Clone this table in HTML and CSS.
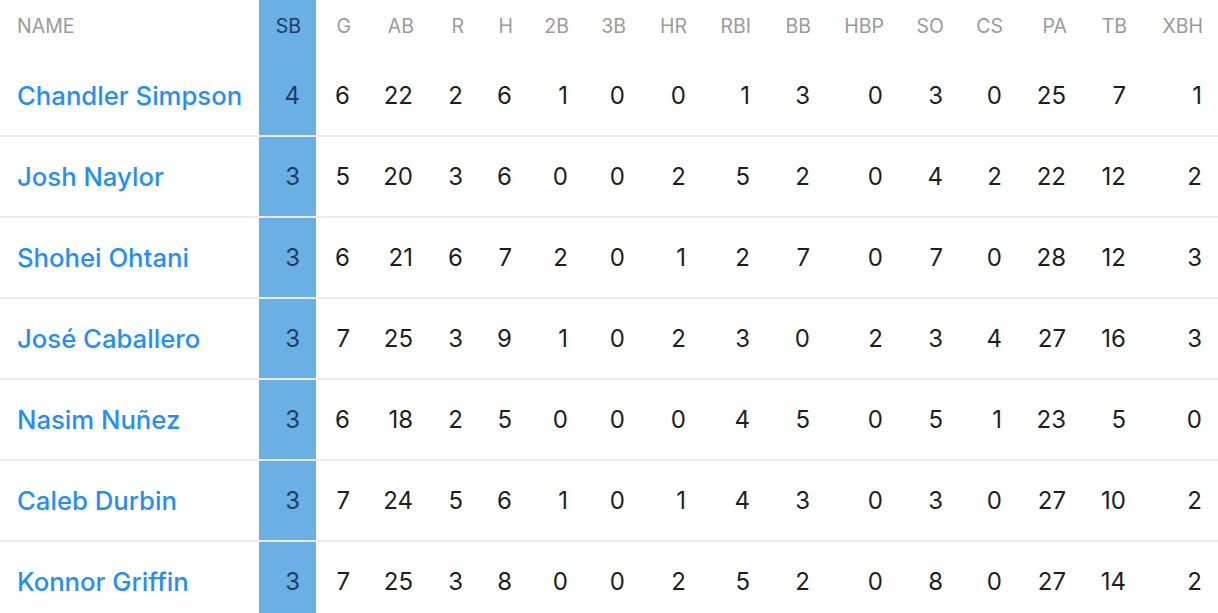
FILE: index.html
```html
<!DOCTYPE html>
<html lang="en">
<head>
<meta charset="utf-8">
<title>Stolen Bases Leaders</title>
<link rel="stylesheet" href="styles.css">
</head>
<body>
<table class="stats">
  <colgroup>
    <col class="c-name"><col class="c-sb"><col class="c-g"><col class="c-ab"><col class="c-r"><col class="c-h"><col class="c-2b"><col class="c-3b"><col class="c-hr"><col class="c-rbi"><col class="c-bb"><col class="c-hbp"><col class="c-so"><col class="c-cs"><col class="c-pa"><col class="c-tb"><col class="c-xbh">
  </colgroup>
  <thead>
    <tr>
      <th class="name">NAME</th><th class="sb">SB</th><th>G</th><th>AB</th><th>R</th><th>H</th><th>2B</th><th>3B</th><th>HR</th><th>RBI</th><th>BB</th><th>HBP</th><th>SO</th><th>CS</th><th>PA</th><th>TB</th><th>XBH</th>
    </tr>
  </thead>
  <tbody>
    <tr><td class="name"><a href="#">Chandler Simpson</a></td><td class="sb">4</td><td>6</td><td>22</td><td>2</td><td>6</td><td>1</td><td>0</td><td>0</td><td>1</td><td>3</td><td>0</td><td>3</td><td>0</td><td>25</td><td>7</td><td>1</td></tr>
    <tr><td class="name"><a href="#">Josh Naylor</a></td><td class="sb">3</td><td>5</td><td>20</td><td>3</td><td>6</td><td>0</td><td>0</td><td>2</td><td>5</td><td>2</td><td>0</td><td>4</td><td>2</td><td>22</td><td>12</td><td>2</td></tr>
    <tr><td class="name"><a href="#">Shohei Ohtani</a></td><td class="sb">3</td><td>6</td><td>21</td><td>6</td><td>7</td><td>2</td><td>0</td><td>1</td><td>2</td><td>7</td><td>0</td><td>7</td><td>0</td><td>28</td><td>12</td><td>3</td></tr>
    <tr><td class="name"><a href="#">José Caballero</a></td><td class="sb">3</td><td>7</td><td>25</td><td>3</td><td>9</td><td>1</td><td>0</td><td>2</td><td>3</td><td>0</td><td>2</td><td>3</td><td>4</td><td>27</td><td>16</td><td>3</td></tr>
    <tr><td class="name"><a href="#">Nasim Nuñez</a></td><td class="sb">3</td><td>6</td><td>18</td><td>2</td><td>5</td><td>0</td><td>0</td><td>0</td><td>4</td><td>5</td><td>0</td><td>5</td><td>1</td><td>23</td><td>5</td><td>0</td></tr>
    <tr><td class="name"><a href="#">Caleb Durbin</a></td><td class="sb">3</td><td>7</td><td>24</td><td>5</td><td>6</td><td>1</td><td>0</td><td>1</td><td>4</td><td>3</td><td>0</td><td>3</td><td>0</td><td>27</td><td>10</td><td>2</td></tr>
    <tr><td class="name"><a href="#">Konnor Griffin</a></td><td class="sb">3</td><td>7</td><td>25</td><td>3</td><td>8</td><td>0</td><td>0</td><td>2</td><td>5</td><td>2</td><td>0</td><td>8</td><td>0</td><td>27</td><td>14</td><td>2</td></tr>
  </tbody>
</table>
</body>
</html>
```

FILE: styles.css
```css
html, body {
  margin: 0;
  padding: 0;
  background: #ffffff;
}

body {
  font-family: "Inter", "Roboto", "Liberation Sans", sans-serif;
  color: #222222;
  overflow: hidden;
}

.stats {
  width: 1218px;
  table-layout: fixed;
  border-collapse: collapse;
}

.c-name { width: 259px; }
.c-sb { width: 57px; }
.c-g { width: 50px; }
.c-ab { width: 63px; }
.c-r { width: 50px; }
.c-h { width: 49px; }
.c-2b { width: 56px; }
.c-3b { width: 57px; }
.c-hr { width: 61px; }
.c-rbi { width: 64px; }
.c-bb { width: 60px; }
.c-hbp { width: 73px; }
.c-so { width: 60px; }
.c-cs { width: 59px; }
.c-pa { width: 64px; }
.c-tb { width: 60px; }
.c-xbh { width: 76px; }

.stats th {
  height: 56px;
  padding: 0 15px 4px 0;
  box-sizing: border-box;
  font-size: 19.5px;
  font-weight: 400;
  color: #9a9a9a;
  text-align: right;
  vertical-align: middle;
  white-space: nowrap;
}

.stats td {
  height: 79px;
  padding: 0 16px 0 0;
  font-size: 24px;
  font-weight: 400;
  color: #1e1e1e;
  text-align: right;
  vertical-align: middle;
  white-space: nowrap;
}

.stats tbody tr {
  border-bottom: 2px solid #ececec;
}

.stats .name {
  text-align: left;
  padding-left: 17px;
}

.stats td.name {
  font-size: 25.7px;
  font-weight: 500;
}

.stats .name a {
  color: #1f8fff;
  text-decoration: none;
}

.stats .sb {
  background: #6ab0e4;
  color: #1c3d63;
}
```
